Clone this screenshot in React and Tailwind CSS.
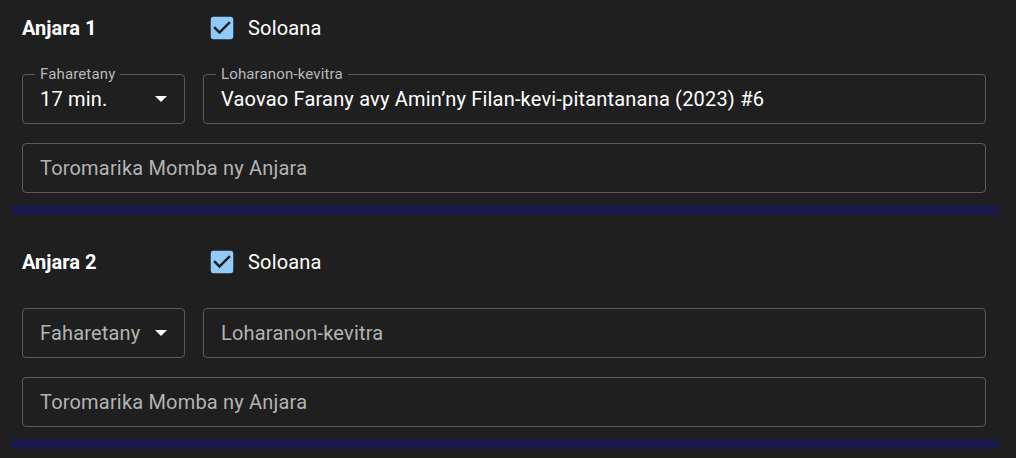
import React from "react";

function CheckIcon() {
  return (
    <svg width="30" height="30" viewBox="0 0 24 24" className="block">
      <path
        fill="#90caf9"
        d="M19 3H5c-1.11 0-2 .9-2 2v14c0 1.1.89 2 2 2h14c1.11 0 2-.9 2-2V5c0-1.1-.89-2-2-2zm-9 14l-5-5 1.41-1.41L10 14.17l7.59-7.59L19 8l-9 9z"
      />
    </svg>
  );
}

function Arrow() {
  return (
    <svg width="12" height="6" viewBox="0 0 12 6" className="block">
      <path d="M0 0 L12 0 L6 6 Z" fill="#ffffff" />
    </svg>
  );
}

function Box({ label, value, placeholder, select, className }) {
  return (
    <div
      className={
        "relative h-[50px] rounded-[4px] border border-[#5a5a5a] flex items-center pl-[17px] " +
        (className || "")
      }
    >
      {label && (
        <span className="absolute left-[12px] top-[-10px] px-[5px] bg-[#1f1f1f] text-[15px] leading-[18px] tracking-[0.00938em] text-[#b9b9b9]">
          {label}
        </span>
      )}
      <span
        className={
          "text-[20px] leading-[24px] tracking-[0.00938em] whitespace-nowrap " +
          (value ? "text-white" : "text-[#b3b3b3]")
        }
      >
        {value || placeholder}
      </span>
      {select && (
        <span className="absolute right-[17px] top-[21px]">
          <Arrow />
        </span>
      )}
    </div>
  );
}

function Section({ n, dur, src, first }) {
  return (
    <div className={first ? "pt-[8px]" : "pt-[27px]"}>
      <div className="flex items-center h-[40px] pl-[22px]">
        <div className="w-[185px] text-[20px] font-bold text-white">Anjara {n}</div>
        <CheckIcon />
        <span className="ml-[11px] text-[20px] tracking-[0.00938em] text-white">Soloana</span>
      </div>
      <div className="mt-[26px] flex gap-[18px] pl-[22px] pr-[30px]">
        {dur ? (
          <Box className="w-[163px] shrink-0" label="Faharetany" value={dur} select />
        ) : (
          <Box className="w-[163px] shrink-0" placeholder="Faharetany" select />
        )}
        {src ? (
          <Box className="flex-1" label="Loharanon-kevitra" value={src} />
        ) : (
          <Box className="flex-1" placeholder="Loharanon-kevitra" />
        )}
      </div>
      <div className="mt-[19px] pl-[22px] pr-[30px]">
        <Box placeholder="Toromarika Momba ny Anjara" />
      </div>
      <div className="mt-[12px] ml-[10px] w-[989px] h-[10px] bg-[#1a1a4a]" />
    </div>
  );
}

export default function App() {
  return (
    <div
      className="w-[1016px] h-[458px] overflow-hidden bg-[#1f1f1f]"
      style={{ fontFamily: "Roboto, 'Liberation Sans', sans-serif" }}
    >
      <Section
        n={1}
        first
        dur="17 min."
        src="Vaovao Farany avy Amin’ny Filan-kevi-pitantanana (2023) #6"
      />
      <Section n={2} />
    </div>
  );
}
